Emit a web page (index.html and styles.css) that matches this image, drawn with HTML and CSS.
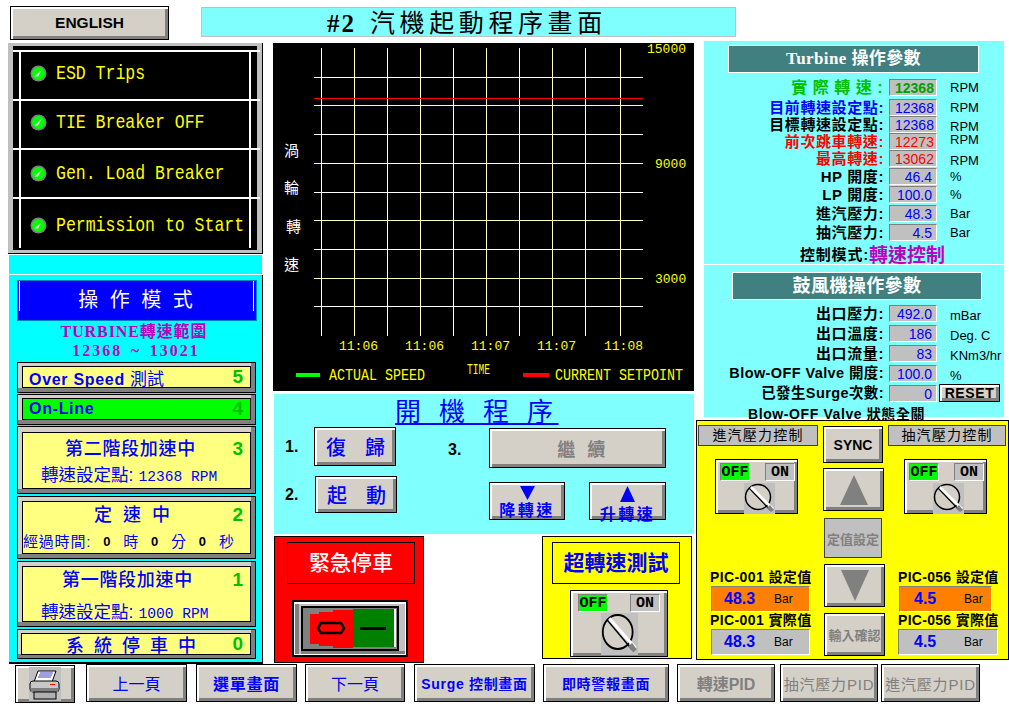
FILE: index.html
```html
<!DOCTYPE html>
<html lang="zh-Hant">
<head>
<meta charset="UTF-8">
<title>#2 汽機起動程序畫面</title>
<link rel="stylesheet" href="styles.css">
</head>
<body>
<svg class="defs">
  <symbol id="led" viewBox="0 0 17 17">
    <circle cx="8.5" cy="8.5" r="8" fill="#808080"/>
    <circle cx="8.5" cy="8.5" r="6.5" fill="#00ff00"/>
    <path d="M4.5 11.5 L11.5 5 L8 11.5 Z" fill="#fff"/>
  </symbol>
  <symbol id="knob" viewBox="0 0 31 31" preserveAspectRatio="none">
    <rect width="31" height="31" fill="#c0c0c0"/>
    <circle cx="14" cy="14" r="12.5" fill="#d4d0c8" stroke="#000" stroke-width="1.5"/>
    <path d="M5 5 L26 27" stroke="#000" stroke-width="1.2"/>
    <path d="M7 4 L29 26" stroke="#fff" stroke-width="2.5"/>
    <path d="M23 25 L27 29 L30 27 L26 22 Z" fill="#808080"/>
  </symbol>
</svg>

<div class="screen">
  <div class="topbar">
    <button class="btn lang">ENGLISH</button>
    <div class="page-title"><b>#2</b>汽機起動程序畫面</div>
  </div>

  <div class="main">
    <!-- left column -->
    <div class="col-left">
      <div class="alarm">
        <div class="alarm-list">
          <div class="alarm-row"><svg class="led"><use href="#led"/></svg><span>ESD Trips</span></div>
          <div class="alarm-row"><svg class="led"><use href="#led"/></svg><span>TIE Breaker OFF</span></div>
          <div class="alarm-row row-c"><svg class="led"><use href="#led"/></svg><span>Gen. Load Breaker</span></div>
          <div class="alarm-row row-d"><svg class="led"><use href="#led"/></svg><span>Permission to Start</span></div>
        </div>
      </div>
      <div class="strip"></div>
      <div class="modes">
        <div class="modes-title">操 作 模 式</div>
        <div class="range">TURBINE轉速範圍</div>
        <div class="range range-val">12368 ~ 13021</div>

        <div class="mode mode-s">
          <div class="mode-in"><span class="mode-en">Over Speed <i>測試</i></span><span class="num">5</span></div>
        </div>
        <div class="mode mode-s">
          <div class="mode-in on"><span class="mode-en">On-Line</span><span class="num">4</span></div>
        </div>
        <div class="mode mode-3">
          <div class="mode-in tall in-3">
            <div class="mode-head"><span class="mode-name name-3">第二階段加速中</span><span class="num">3</span></div>
            <div class="mode-sub sub-3">轉速設定點:<span class="mono">12368 RPM</span></div>
          </div>
        </div>
        <div class="mode mode-2">
          <div class="mode-in tall">
            <div class="mode-head"><span class="mode-name name-2">定 速 中</span><span class="num">2</span></div>
            <div class="mode-sub sub-2">經過時間:<b>0</b>時<b>0</b>分<b>0</b>秒</div>
          </div>
        </div>
        <div class="mode mode-1">
          <div class="mode-in tall">
            <div class="mode-head"><span class="mode-name name-1">第一階段加速中</span><span class="num">1</span></div>
            <div class="mode-sub sub-1">轉速設定點:<span class="mono">1000 RPM</span></div>
          </div>
        </div>
        <div class="mode mode-0">
          <div class="mode-in"><span class="mode-name name-0">系 統 停 車 中</span><span class="num">0</span></div>
        </div>
      </div>
    </div>

    <!-- middle column -->
    <div class="col-mid">
      <svg class="chart" width="421" height="348" viewBox="0 0 421 348">
        <g class="grid-w">
          <path d="M48 5V293M114 5V293M180 5V293M246 5V293M312 5V293"/>
          <path d="M41 34H370M41 91H370M41 149H370M41 206H370M41 263H370"/>
        </g>
        <g class="grid-y">
          <path d="M81 5V293M147 5V293M213 5V293M279 5V293M347 5V293"/>
          <path d="M41 62H370M41 120H370M41 177H370M41 235H370"/>
        </g>
        <path class="setline" d="M41 55H370"/>
        <text class="ax" x="374" y="10">15000</text>
        <text class="ax" x="382" y="125">9000</text>
        <text class="ax" x="382" y="240">3000</text>
        <text class="ax" x="66" y="307">11:06</text>
        <text class="ax" x="132" y="307">11:06</text>
        <text class="ax" x="198" y="307">11:07</text>
        <text class="ax" x="264" y="307">11:07</text>
        <text class="ax" x="331" y="307">11:08</text>
        <text class="yt" x="11" y="113">渦</text>
        <text class="yt" x="11" y="150">輪</text>
        <text class="yt" x="13" y="189">轉</text>
        <text class="yt" x="11" y="227">速</text>
        <rect x="23" y="330" width="24" height="4" fill="#00ff00"/>
        <text class="leg" transform="translate(56 337) scale(.784 1)">ACTUAL SPEED</text>
        <text class="leg leg-t" transform="translate(194 331) scale(.684 1)">TIME</text>
        <rect x="250" y="330" width="26" height="4" fill="#ff0000"/>
        <text class="leg" transform="translate(282 337) scale(.785 1)">CURRENT SETPOINT</text>
      </svg>

      <div class="seq">
        <div class="seq-title"><u>開 機 程 序</u></div>
        <div class="seq-body">
          <div class="seq-left">
            <div class="seq-row"><span class="step">1.</span><button class="btn seq-btn">復歸</button></div>
            <div class="seq-row row-2"><span class="step">2.</span><button class="btn seq-btn btn-start">起動</button></div>
          </div>
          <div class="seq-right">
            <div class="seq-row"><span class="step step-3">3.</span><button class="btn btn-cont">繼 續</button></div>
            <div class="speed-row">
              <button class="btn btn-speed">
                <svg width="15" height="15"><path d="M0 0H15L7.5 14Z" fill="#0000ff"/></svg>
                <span>降轉速</span>
              </button>
              <button class="btn btn-speed btn-up">
                <svg width="15" height="16"><path d="M0 16H15L7.5 0Z" fill="#0000ff"/></svg>
                <span>升轉速</span>
              </button>
            </div>
          </div>
        </div>
      </div>

      <div class="mid-bottom">
        <div class="estop">
          <div class="panel-name">緊急停車</div>
          <svg class="rocker" width="116" height="57" viewBox="0 0 116 57">
            <rect width="116" height="57" fill="#000"/>
            <rect x="2" y="2" width="112" height="53" fill="#fff"/>
            <rect x="3" y="4" width="110" height="50" fill="#c0c0c0"/>
            <path d="M3 4H7V54H113V51H15V9L3 9Z M3 9H9V54H3Z" fill="#808080"/>
            <rect x="10" y="7" width="96" height="43" fill="none" stroke="#000" stroke-width="2"/>
            <rect x="11" y="8" width="94" height="41" fill="#808080"/>
            <path d="M18 14H27V12H41V10H61V48H41V46H27V44H18Z" fill="#ff0000"/>
            <rect x="61" y="9" width="41" height="38" fill="#008000"/>
            <path d="M102 9H104V47H102Z" fill="#fff"/>
            <path d="M29 23H49L52 28.5L49 33H29L26 28.5Z" fill="none" stroke="#000" stroke-width="2.5"/>
            <rect x="68" y="27" width="26" height="3" fill="#000"/>
          </svg>
        </div>
        <div class="ospeed">
          <div class="panel-name blue">超轉速測試</div>
          <div class="btn switch sw-big">
            <div class="sw-labels"><span class="sw-off">OFF</span><span class="sw-on">ON</span></div>
            <svg class="knob-big"><use href="#knob"/></svg>
          </div>
        </div>
      </div>
    </div>

    <!-- right column -->
    <div class="col-right">
      <div class="params p1">
        <div class="param-head">Turbine 操作參數</div>
        <div class="param-grid g1">
          <div class="lbl green spaced">實際轉速:</div><div class="val first">12368</div><div class="unit">RPM</div>
          <div class="lbl blue">目前轉速設定點:</div><div class="val">12368</div><div class="unit">RPM</div>
          <div class="lbl">目標轉速設定點:</div><div class="val">12368</div><div class="unit low">RPM</div>
          <div class="lbl red">前次跳車轉速:</div><div class="val red">12273</div><div class="unit up">RPM</div>
          <div class="lbl red">最高轉速:</div><div class="val red">13062</div><div class="unit low">RPM</div>
          <div class="lbl">HP 開度:</div><div class="val right">46.4</div><div class="unit">%</div>
          <div class="lbl">LP 開度:</div><div class="val right">100.0</div><div class="unit">%</div>
          <div class="lbl">進汽壓力:</div><div class="val right">48.3</div><div class="unit">Bar</div>
          <div class="lbl">抽汽壓力:</div><div class="val right">4.5</div><div class="unit">Bar</div>
        </div>
        <div class="ctrl-mode">控制模式:<span>轉速控制</span></div>
      </div>
      <div class="params p2">
        <div class="param-head head-2">鼓風機操作參數</div>
        <div class="param-grid g2">
          <div class="lbl">出口壓力:</div><div class="val right">492.0</div><div class="unit low">mBar</div>
          <div class="lbl">出口溫度:</div><div class="val right">186</div><div class="unit low">Deg. C</div>
          <div class="lbl">出口流量:</div><div class="val right">83</div><div class="unit low">KNm3/hr</div>
          <div class="lbl wide">Blow-OFF Valve 開度:</div><div class="val right">100.0</div><div class="unit low">%</div>
          <div class="lbl wide">已發生Surge次數:</div><div class="val right">0</div><button class="btn reset">RESET</button>
        </div>
        <div class="valve-state">Blow-OFF Valve 狀態全關</div>
      </div>
      <div class="ctrl">
        <div class="ctrl-side">
          <div class="ctrl-name">進汽壓力控制</div>
          <div class="btn switch sw-small">
            <div class="sw-labels"><span class="sw-off">OFF</span><span class="sw-on">ON</span></div>
            <svg class="knob"><use href="#knob"/></svg>
          </div>
          <div class="pic-name pic-first">PIC-001 設定值</div>
          <div class="pic-box orange"><b>48.3</b><span>Bar</span></div>
          <div class="pic-name">PIC-001 實際值</div>
          <div class="pic-box"><b>48.3</b><span>Bar</span></div>
        </div>
        <div class="ctrl-mid">
          <button class="btn sync">SYNC</button>
          <button class="btn arrow arrow-up"><svg width="28" height="30"><path d="M0 30H28L14 0Z" fill="#808080"/></svg></button>
          <button class="flat-set">定值設定</button>
          <button class="btn arrow arrow-down"><svg width="28" height="31"><path d="M0 0H28L14 31Z" fill="#808080"/></svg></button>
          <button class="btn arrow confirm">輸入確認</button>
        </div>
        <div class="ctrl-side side-right">
          <div class="ctrl-name">抽汽壓力控制</div>
          <div class="btn switch sw-small">
            <div class="sw-labels"><span class="sw-off">OFF</span><span class="sw-on">ON</span></div>
            <svg class="knob"><use href="#knob"/></svg>
          </div>
          <div class="pic-name pic-first">PIC-056 設定值</div>
          <div class="pic-box orange box-narrow"><b>4.5</b><span>Bar</span></div>
          <div class="pic-name">PIC-056 實際值</div>
          <div class="pic-box box-wide"><b>4.5</b><span>Bar</span></div>
        </div>
      </div>
    </div>
  </div>

  <div class="navbar">
    <button class="btn nav nav-print">
      <svg width="32" height="34" viewBox="0 0 32 34">
        <rect width="32" height="34" fill="#c0c0c0"/>
        <path d="M9 4H27L23 15H5Z" fill="#fff" stroke="#000"/>
        <path d="M11 6H24M10 8H23M9 10H22" stroke="#4040c0"/>
        <rect x="1" y="14" width="29" height="11" rx="3" fill="#c8c8c8" stroke="#000"/>
        <rect x="1.5" y="21" width="28" height="4" fill="#808080"/>
        <rect x="21" y="17" width="5" height="1" fill="#ff0000"/>
        <rect x="5" y="25" width="22" height="7" fill="#b0b0b0" stroke="#000"/>
      </svg>
    </button>
    <button class="btn nav nav-1">上一頁</button>
    <button class="btn nav nav-2">選單畫面</button>
    <button class="btn nav nav-3">下一頁</button>
    <button class="btn nav nav-4 small">Surge 控制畫面</button>
    <button class="btn nav nav-5 small">即時警報畫面</button>
    <button class="btn nav nav-6 off">轉速PID</button>
    <button class="btn nav nav-7 off">抽汽壓力PID</button>
    <button class="btn nav nav-8 off">進汽壓力PID</button>
  </div>
</div>
</body>
</html>
```

FILE: styles.css
```css
* {
  box-sizing: border-box;
}
body {
  margin: 0;
  background-color: #fff;
  font-family: "Liberation Sans", "Noto Sans CJK TC", sans-serif;
  color: #000;
}
.defs {
  display: none;
}
.screen {
  width: 1009px;
  height: 710px;
  overflow: hidden;
}

/* shared raised button */
.btn {
  display: block;
  padding: 0;
  border: 1px solid #000;
  background-color: #d4d0c8;
  box-shadow: inset 2px 2px 0 #fff, inset -3px -3px 0 #808080;
  font-family: inherit;
  color: #0000ff;
}

/* top bar */
.topbar {
  display: flex;
  height: 41px;
  padding: 6px 0 0 10px;
}
.lang {
  width: 159px;
  height: 34px;
  font-size: 15.5px;
  font-weight: bold;
  color: #000;
}
.page-title {
  width: 535px;
  height: 30px;
  margin: 1px 0 0 32px;
  padding-left: 125px;
  border: 1px solid #c0c0c0;
  background-color: #80ffff;
  font-size: 25px;
  line-height: 30px;
  letter-spacing: 4.6px;
}
.page-title b {
  margin-right: 14px;
  font-family: "Liberation Serif", serif;
  letter-spacing: 2px;
}

.main {
  display: flex;
  height: 623px;
}

/* left column */
.col-left {
  width: 255px;
  margin: 2px 0 0 8px;
}
.alarm {
  width: 255px;
  height: 211px;
  padding: 3px 0 0 5px;
  border-right: 1px solid #000;
  border-bottom: 1px solid #000;
  background-color: #c0c0c0;
}
.alarm-list {
  width: 244px;
  height: 204px;
  padding-top: 4px;
  background:
    linear-gradient(#fff, #fff) 6px 4px / 2px 198px no-repeat,
    linear-gradient(#fff, #fff) 236px 4px / 2px 198px no-repeat,
    #000;
}
.alarm-row {
  display: flex;
  align-items: center;
  width: 247px;
  height: 49px;
  padding: 0 0 4px 17px;
  border-top: 2px solid #fff;
  font-family: "Liberation Mono", monospace;
  font-size: 16.5px;
  color: #ffff00;
}
.alarm-row span {
  display: inline-block;
  transform: scaleY(1.25);
}
.row-c {
  padding-bottom: 0;
}
.row-d {
  padding: 6px 0 0 17px;
}
.led {
  width: 17px;
  height: 17px;
  margin-right: 9px;
}
.strip {
  width: 253px;
  height: 19px;
  margin: 1px 0 0 1px;
  background-color: #00ffff;
}
.modes {
  width: 254px;
  height: 389px;
  margin: 1px 0 0 1px;
  padding: 5px 5px 0 8px;
  border-right: 1px solid #000;
  border-bottom: 2px solid #000;
  background-color: #00ffff;
}
.modes-title {
  height: 41px;
  border: 1px solid #0080c0;
  background:
    linear-gradient(#fff, #fff) 1px 0 / 1px 30px no-repeat,
    linear-gradient(#fff, #fff) 235px 0 / 1px 30px no-repeat,
    #0000ff;
  font-size: 20px;
  line-height: 38px;
  text-align: center;
  letter-spacing: 3px;
  color: #fff;
}
.range {
  height: 19px;
  margin-top: 1px;
  padding-right: 6px;
  font-family: "Liberation Serif", "Noto Sans CJK TC", serif;
  font-size: 16px;
  font-weight: bold;
  line-height: 19px;
  letter-spacing: .9px;
  text-align: center;
  color: #c000c0;
}
.range-val {
  margin: 0 0 2px;
  padding-right: 2px;
  letter-spacing: 2px;
  word-spacing: 2.5px;
}
.mode {
  width: 239px;
  margin-bottom: 1px;
  border: 1px solid #000;
  background-color: #d4d0c8;
  box-shadow: inset -4px -4px 0 #808080;
}
.mode-s { height: 31px; padding: 3px 4px 4px; }
.mode-3 { height: 68px; padding: 5px 4px 4px; margin-bottom: 2px; }
.mode-2 { height: 63px; padding: 4px 4px 4px; margin-bottom: 2px; }
.mode-1 { height: 66px; padding: 4px 4px 4px; margin-bottom: 2px; }
.mode-0 { height: 30px; padding: 3px 4px 3px 3px; }
.mode-in {
  display: flex;
  align-items: center;
  justify-content: space-between;
  height: 100%;
  padding: 0 7px 0 6px;
  border: 1px solid #000;
  background-color: #ffff80;
  color: #0000ff;
}
.mode-in.tall {
  display: block;
  padding-top: 1px;
}
.mode-in.in-3 {
  padding-top: 4px;
}
.mode-in.on {
  background-color: #00ff00;
}
.mode-en {
  font-size: 16px;
  font-weight: bold;
  letter-spacing: .7px;
}
.mode-en i {
  font-style: normal;
  font-weight: normal;
  font-size: 17px;
  letter-spacing: 0;
}
.num {
  font-size: 19px;
  font-weight: bold;
  color: #00c000;
}
.mode-head {
  display: flex;
  align-items: center;
  justify-content: space-between;
  height: 24px;
  line-height: 24px;
}
.mode-name {
  font-size: 18px;
  letter-spacing: .7px;
  font-weight: 500;
}
.name-3 { margin-left: 36px; }
.name-2 { margin-left: 65px; letter-spacing: 3px; }
.name-1 { margin-left: 33px; }
.name-0 { margin-left: 38px; letter-spacing: 2.5px; }
.mode-sub {
  font-size: 17.5px;
  line-height: 24px;
}
.mono {
  margin-left: 5px;
  font-family: "Liberation Mono", monospace;
  font-size: 14.6px;
}
.sub-3 { margin-top: 2px; padding-left: 12px; }
.sub-1 { margin-top: 8px; padding-left: 12px; }
.sub-2 {
  display: flex;
  margin: 3px 0 0 -6px;
  font-size: 15px;
  letter-spacing: .8px;
}
.sub-2 b {
  margin: 0 12px;
  font-size: 13px;
  color: #000;
}

/* middle column */
.col-mid {
  width: 421px;
  margin: 2px 0 0 10px;
}
.chart {
  display: block;
  background-color: #000;
}
.grid-w path, .grid-y path, .setline {
  fill: none;
  shape-rendering: crispEdges;
  stroke-width: 1;
}
.grid-w path { stroke: #fff; }
.grid-y path { stroke: #ffffc0; }
.setline { stroke: #ff0000; }
.ax {
  font-family: "Liberation Mono", monospace;
  font-size: 13px;
  fill: #ffff00;
}
.yt {
  font-size: 15px;
  fill: #fff;
}
.leg {
  font-family: "Liberation Mono", monospace;
  font-size: 17px;
  fill: #ffff00;
}
.leg-t {
  font-size: 14px;
}
.seq {
  width: 420px;
  height: 140px;
  margin: 3px 0 0 1px;
  background-color: #80ffff;
}
.seq-title {
  height: 33px;
  padding-left: 121px;
  font-size: 26px;
  line-height: 36px;
  letter-spacing: 5.4px;
  color: #0000ff;
}
.seq-body {
  display: flex;
}
.seq-left {
  width: 134px;
  padding-left: 11px;
}
.seq-row {
  display: flex;
  align-items: center;
}
.row-2 {
  margin-top: 10px;
}
.step {
  width: 29px;
  font-size: 16px;
  font-weight: bold;
}
.seq-btn {
  width: 82px;
  height: 39px;
  font-size: 20px;
  font-weight: 500;
  letter-spacing: 19px;
  text-indent: 11px;
  text-align: left;
  white-space: nowrap;
}
.btn-start {
  height: 37px;
  margin-left: 1px;
}
.seq-right {
  padding: 1px 0 0 40px;
}
.step-3 {
  width: 41px;
  padding-top: 4px;
}
.btn-cont {
  width: 177px;
  height: 40px;
  padding-left: 11px;
  font-size: 18px;
  font-weight: bold;
  letter-spacing: 3.5px;
  color: #808080;
}
.speed-row {
  display: flex;
  gap: 24px;
  margin: 14px 0 0 41px;
}
.btn-speed {
  display: flex;
  flex-direction: column;
  align-items: center;
  width: 76px;
  height: 38px;
  padding: 3px 0 0;
  font-size: 16px;
  font-weight: bold;
  letter-spacing: 2.5px;
  line-height: 15px;
}
.btn-speed svg {
  display: block;
  flex-shrink: 0;
}
.btn-speed span {
  margin-top: 2px;
}
.btn-up {
  width: 77px;
}
.btn-up span {
  margin-top: 5px;
}
.mid-bottom {
  display: flex;
  margin: 2px 0 0 1px;
}
.estop {
  width: 150px;
  height: 127px;
  padding: 5px 0 0 12px;
  border: 1px solid #000;
  background-color: #ff0000;
}
.panel-name {
  width: 128px;
  height: 42px;
  border: 1px solid #000;
  font-size: 21px;
  font-weight: 500;
  line-height: 40px;
  text-align: center;
  color: #fff;
}
.panel-name.blue {
  color: #0000ff;
  font-weight: bold;
  background-color: #ffff00;
}
.rocker {
  display: block;
  margin: 16px 0 0 5px;
}
.ospeed {
  width: 150px;
  height: 123px;
  margin-left: 118px;
  padding: 5px 0 0 9px;
  border: 1px solid #000;
  background-color: #ffff00;
}

/* rotary switch */
.switch {
  display: block;
}
.sw-labels {
  display: flex;
  justify-content: space-between;
  color: #000;
  font-family: "Liberation Mono", monospace;
  font-size: 15px;
  font-weight: bold;
  line-height: 17px;
}
.sw-off, .sw-on {
  width: 30px;
  height: 18px;
  border: 1px solid #fff;
  border-top-color: #808080;
  border-left-color: #808080;
  text-align: center;
}
.sw-off {
  background-color: #00ff00;
}
.sw-on {
  background-color: #c0c0c0;
}
.sw-big {
  width: 98px;
  height: 67px;
  margin: 6px 0 0 18px;
  padding: 3px 7px 0 7px;
}
.knob-big {
  display: block;
  width: 37px;
  height: 42px;
  margin: 1px 0 0 23px;
}
.sw-small {
  width: 83px;
  height: 55px;
  margin: 13px 0 0 17px;
  padding: 3px 2px 0 4px;
}
.side-right .sw-small {
  margin-left: 16px;
}
.knob {
  display: block;
  width: 31px;
  height: 31px;
  margin: 2px 0 0 24px;
}

/* right column */
.col-right {
  width: 304px;
  margin-left: 2px;
}
.params {
  width: 300px;
  margin-left: 8px;
  background-color: #80ffff;
}
.p1 {
  height: 223px;
  padding-top: 4px;
}
.p2 {
  height: 152px;
  margin-top: 1px;
  padding-top: 7px;
}
.param-head {
  width: 251px;
  height: 28px;
  margin-left: 24px;
  border: 1px solid #fff;
  background-color: #408080;
  font-family: "Liberation Serif", "Noto Sans CJK TC", serif;
  font-size: 17px;
  font-weight: bold;
  line-height: 26px;
  letter-spacing: .4px;
  text-align: center;
  color: #fff;
}
.head-2 {
  width: 250px;
  margin-left: 28px;
  font-size: 18px;
}
.param-grid {
  display: grid;
  grid-template-columns: 180px 48px 1fr;
  column-gap: 5px;
  margin-top: 6px;
}
.g1 {
  grid-template-rows: 20px 17px 17px 17px 18px 18px 19px 19px 18px;
}
.g2 {
  margin-top: 5px;
  grid-template-rows: 20px 20px 20px 20px 19px;
}
.lbl {
  font-size: 15px;
  font-weight: bold;
  line-height: 17px;
  letter-spacing: .6px;
  text-align: right;
  white-space: nowrap;
}
.lbl.wide {
  font-size: 14.5px;
  letter-spacing: .4px;
}
.green { color: #00c000; }
.blue { color: #0000ff; }
.red { color: #ff0000; }
.lbl.spaced {
  margin-right: -4px;
  font-size: 16px;
  letter-spacing: 5.5px;
}
.val {
  height: 17px;
  padding: 0 5px;
  border: 1px solid #fff;
  border-top-color: #808080;
  border-left-color: #808080;
  background-color: #c0c0c0;
  font-size: 14px;
  line-height: 17px;
  color: #0000ff;
  text-align: center;
}
.val.first {
  font-weight: bold;
  color: #00a000;
}
.val.red {
  color: #ff0000;
}
.val.right {
  text-align: right;
  padding-right: 4px;
}
.unit {
  padding-left: 8px;
  font-size: 13px;
  line-height: 17px;
  color: #000;
}
.unit.low { padding-top: 2px; }
.unit.up { margin-top: -2px; }
.ctrl-mode {
  display: flex;
  align-items: center;
  height: 24px;
  margin-top: -1px;
  padding-left: 96px;
  font-size: 15px;
  font-weight: bold;
  letter-spacing: .8px;
}
.ctrl-mode span {
  font-size: 19px;
  letter-spacing: 0;
  color: #c000c0;
}
.reset {
  width: 61px;
  height: 18px;
  margin: -1px 0 0 -3px;
  font-size: 14px;
  font-weight: bold;
  letter-spacing: .6px;
  line-height: 14px;
  color: #000;
}
.valve-state {
  margin-top: 2px;
  padding-left: 44px;
  font-size: 14px;
  font-weight: bold;
  line-height: 17px;
  letter-spacing: .6px;
}

/* yellow control panel */
.ctrl {
  display: flex;
  width: 313px;
  height: 240px;
  margin-top: 3px;
  padding: 4px 0 0 1px;
  border: 1px solid #000;
  background-color: #ffff00;
}
.ctrl-side {
  width: 120px;
}
.side-right {
  width: 118px;
  margin-left: 3px;
}
.ctrl-name {
  height: 21px;
  border: 1px solid #404040;
  background-color: #c0c0c0;
  font-size: 14px;
  line-height: 19px;
  letter-spacing: 1.2px;
  text-align: center;
}
.pic-name {
  height: 17px;
  margin-left: 12px;
  font-size: 14px;
  font-weight: bold;
  line-height: 17px;
  letter-spacing: .4px;
  white-space: nowrap;
}
.side-right .pic-name {
  margin-left: 10px;
  letter-spacing: .3px;
}
.pic-first {
  margin-top: 55px;
}
.pic-box {
  display: flex;
  align-items: center;
  width: 99px;
  height: 26px;
  margin-left: 13px;
  padding-left: 12px;
  border: 1px solid #fff;
  border-top-color: #808080;
  border-left-color: #808080;
  background-color: #c0c0c0;
  color: #0000ff;
}
.pic-box b {
  width: 50px;
  font-size: 16px;
}
.pic-box span {
  font-size: 12px;
  color: #000;
}
.pic-box.orange {
  background-color: #ff8000;
}
.box-narrow {
  width: 93px;
  margin-left: 11px;
  padding-left: 14px;
}
.box-wide {
  width: 100px;
  margin-left: 10px;
  padding-left: 15px;
}
.ctrl-mid {
  width: 62px;
  margin-left: 5px;
}
.sync {
  width: 60px;
  height: 37px;
  margin-top: 1px;
  font-size: 14px;
  font-weight: bold;
  color: #000;
}
.arrow {
  display: flex;
  align-items: center;
  justify-content: center;
  width: 61px;
  height: 43px;
  color: #808080;
}
.arrow-up {
  margin-top: 5px;
}
.flat-set {
  display: block;
  width: 58px;
  height: 40px;
  margin: 7px 0 0 1px;
  padding: 0;
  border: 1px solid #404040;
  background-color: #c0c0c0;
  font-family: inherit;
  font-size: 13px;
  font-weight: bold;
  color: #808080;
}
.arrow-down {
  margin: 6px 0 0 1px;
}
.confirm {
  margin: 6px 0 0 1px;
  font-size: 13px;
  font-weight: bold;
}

/* bottom nav */
.navbar {
  display: flex;
  height: 46px;
}
.nav {
  height: 38px;
  font-size: 16px;
  white-space: nowrap;
}
.nav.small {
  font-size: 14px;
  font-weight: bold;
  letter-spacing: .7px;
}
.nav.off {
  font-size: 15px;
  letter-spacing: .8px;
  color: #808080;
}
.nav-print {
  display: flex;
  align-items: center;
  justify-content: center;
  width: 60px;
  margin: 1px 0 0 15px;
}
.nav-1 { width: 101px; margin-left: 11px; }
.nav-2 { width: 101px; margin-left: 9px; font-weight: bold; letter-spacing: .7px; }
.nav-3 { width: 100px; margin-left: 8px; }
.nav-4 { width: 121px; margin-left: 9px; }
.nav-5 { width: 126px; margin-left: 8px; }
.nav.nav-6 { width: 98px; margin-left: 8px; font-size: 16px; font-weight: bold; letter-spacing: 0; }
.nav-7 { width: 98px; margin-left: 5px; }
.nav-8 { width: 99px; margin-left: 3px; }
```
